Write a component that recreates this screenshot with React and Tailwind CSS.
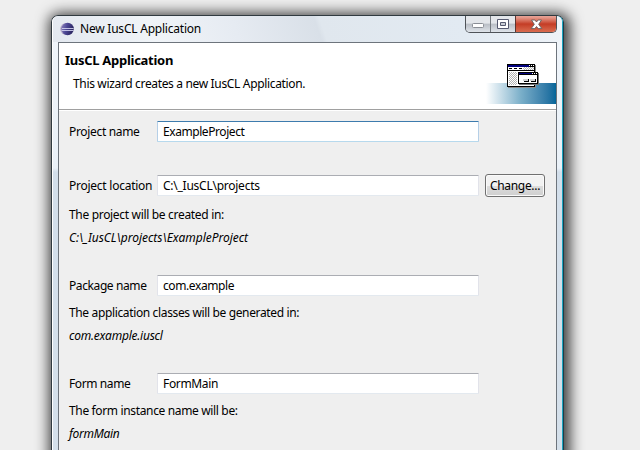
function EclipseIcon() {
  return (
    <svg width="14" height="14" viewBox="0 0 14 14" className="shrink-0">
      <defs>
        <linearGradient id="orb" x1="0" y1="0" x2="1" y2="0.3">
          <stop offset="0" stopColor="#8d84c0" />
          <stop offset="0.5" stopColor="#4c4794" />
          <stop offset="1" stopColor="#2b2662" />
        </linearGradient>
      </defs>
      <circle cx="6.2" cy="7" r="6" fill="#b9aec9" />
      <circle cx="7.6" cy="7" r="6.2" fill="url(#orb)" />
      <path d="M2 6.500h11.600M1.600 8.500h12" stroke="#d0d0ee" strokeWidth="0.9" />
    </svg>
  );
}

function WizardIcon() {
  return (
    <svg width="32" height="24" viewBox="0 0 32 24" shapeRendering="crispEdges">
      <defs>
        <pattern id="dither" width="2" height="2" patternUnits="userSpaceOnUse">
          <rect width="2" height="2" fill="#fff" />
          <rect width="1" height="1" fill="#b4b4b4" />
          <rect x="1" y="1" width="1" height="1" fill="#b4b4b4" />
        </pattern>
      </defs>
      <path d="M1 23h28v1H1zM28 1h1v22h-1z" fill="#8a8a8a" />
      <rect width="28" height="23" fill="#000" />
      <rect x="1" y="1" width="21" height="2" fill="#000080" />
      <path d="M22 1h1v1h-1zM24 1h1v1h-1zM26 1h1v1h-1z" fill="#fff" />
      <rect x="1" y="3" width="26" height="3" fill="#fff" />
      <path d="M2 4h3v1H2zM7 4h3v1H7zM12 4h3v1h-3z" fill="#000" />
      <path d="M16 3h11v3H16z" fill="url(#dither)" />
      <rect x="1" y="7" width="26" height="15" fill="#fff" />
      <rect x="2" y="8" width="8" height="13" fill="url(#dither)" />
      <path d="M12 20h20v1H12zM31 9h1v12h-1z" fill="#777" />
      <rect x="11" y="8" width="20" height="12" fill="#000" />
      <rect x="12" y="9" width="13" height="1" fill="#000080" />
      <path d="M25 9h1v1h-1zM27 9h1v1h-1zM29 9h1v1h-1z" fill="#fff" />
      <rect x="12" y="11" width="18" height="8" fill="#fff" />
      <path d="M17 17h5v1h-5zM24 17h5v1h-5zM21 15h1v2h-1zM28 15h1v2h-1z" fill="#000" />
      <path d="M16 15h5v2h-5zM23 15h5v2h-5z" fill="#d4d4d4" />
    </svg>
  );
}

function WindowButtons() {
  return (
    <div className="flex h-[17px] w-[92px] overflow-hidden rounded-b-[5px] border border-t-0 border-[#4f5358]">
      <div className="flex w-[25px] items-center justify-center border-r border-[#74797f] bg-linear-to-b from-[#e3e6ea] from-45% via-[#b9bec5] via-50% to-[#dfe4ea]">
        <svg width="13" height="6" viewBox="0 0 13 6" className="mt-1">
          <rect x="0.500" y="0.500" width="11" height="4" rx="1" fill="#fff" stroke="#8a8e95" />
        </svg>
      </div>
      <div className="flex w-[25px] items-center justify-center border-r border-[#5c3530] bg-linear-to-b from-[#e3e6ea] from-45% via-[#b9bec5] via-50% to-[#dfe4ea]">
        <svg width="12" height="10" viewBox="0 0 12 10">
          <path d="M.5 .5h11v9H.5z" fill="#fff" stroke="#565a70" />
          <path d="M3.5 3.5h5v3h-5z" fill="#c9cdd4" stroke="#565a70" />
        </svg>
      </div>
      <div className="flex flex-1 items-center justify-center bg-linear-to-b from-[#e7a093] from-5% via-[#c43c25] via-50% to-[#d96c50]">
        <svg width="13" height="11" viewBox="0 0 13 11">
          <path
            d="M1.500 1h3.400l1.600 2 1.600-2h3.400L8.700 5.300l3.100 4.300H8.200L6.500 7.500 4.800 9.600H1.200L4.300 5.300z"
            fill="#fff"
            stroke="#65605f"
            strokeWidth="0.9"
            strokeLinejoin="round"
          />
        </svg>
      </div>
    </div>
  );
}

function Field({ label, value, labelClass = "", valueClass = "", focused, action }) {
  return (
    <div className="flex h-[23px] items-center">
      <div className="w-[88px] shrink-0">
        <span className={labelClass}>{label}</span>
      </div>
      <div
        className={
          "flex h-[21px] w-[322px] items-center rounded-[1px] border bg-white pl-[5px] " +
          (focused
            ? "border-[#b5cfe7] border-t-[#3d7bad] border-b-[#b7d9ed]"
            : "border-[#e2e3ea] border-t-[#abadb3] border-b-[#e3e9ef]")
        }
      >
        <span className={valueClass}>{value}</span>
      </div>
      {action}
    </div>
  );
}

export default function App() {
  return (
    <div className="flex h-[450px] w-[640px] overflow-hidden bg-[#efefef] pt-[15px] pl-[51px] font-['Noto_Sans','Open_Sans',sans-serif] text-[12px] leading-4 whitespace-nowrap text-black">
      <div className="flex h-[520px] w-[513px] shrink-0 flex-col rounded-t-[7px] border border-[#303a40] border-r-[#1f3c48] bg-[linear-gradient(to_bottom,#f0f5fa_0,#eaf1f8_152px,#d3dfeb_156px,#d5e0ea_100%)] shadow-[2px_2px_14px_4px_rgba(0,0,0,0.75)]">
        <div className="flex grow flex-col rounded-t-[6px] border-r border-l border-r-[#19a3bf] border-l-white px-[5px]">
          <div className="-mx-[5px] flex h-[26px] shrink-0 justify-between rounded-t-[6px] bg-[linear-gradient(70deg,#e3e8ef_0,#f0f4f8_20%,#e6ebf2_36%,#d9e0e8_52%,#e0e7ee_53%,#e2eaf2_80%,#eff4f9_100%)] px-[5px]">
            <div className="flex items-center gap-[6px] pl-[2px]">
              <EclipseIcon />
              <span className="tracking-[-0.22px]">New IusCL Application</span>
            </div>
            <WindowButtons />
          </div>
          <div className="flex grow flex-col border border-[#6d747c] bg-[#efefef]">
            <div className="flex h-[67px] shrink-0 justify-between border-b border-[#a0a0a0] bg-white">
              <div className="flex flex-col gap-[8px] pt-[9px] pl-[6px]">
                <span className="text-[13px] leading-4 font-bold tracking-[-0.28px]">IusCL Application</span>
                <span className="pl-2 tracking-[-0.34px]">This wizard creates a new IusCL Application.</span>
              </div>
              <div className="relative flex w-[70px] flex-col justify-end pb-[5px]">
                <div className="h-[21px] bg-linear-to-r from-white via-[#7aafc9] via-50% to-[#00669a]" />
                <div className="absolute top-[21px] left-[21px]">
                  <WizardIcon />
                </div>
              </div>
            </div>
            <div className="flex flex-col border-t border-white px-[10px] pt-[9px]">
              <Field
                label="Project name"
                labelClass="tracking-[-0.33px]"
                value="ExampleProject"
                valueClass="tracking-[-0.43px]"
                focused
              />
              <div className="h-[31px]" />
              <Field
                label="Project location"
                labelClass="tracking-[-0.25px]"
                value="C:\_IusCL\projects"
                valueClass="tracking-[-0.25px]"
                action={
                  <div className="ml-[6px] flex h-[23px] w-[60px] items-center justify-center rounded-[3px] border border-[#707070] bg-linear-to-b from-[#f2f2f2] from-50% via-[#dddddd] via-51% to-[#cfcfcf] shadow-[inset_0_0_0_1px_#fafafa]">
                    <span className="tracking-[-0.3px]">Change...</span>
                  </div>
                }
              />
              <div className="flex h-[77px] flex-col gap-[7px] pt-[10px]">
                <span className="tracking-[-0.32px]">The project will be created in:</span>
                <span className="tracking-[-0.04px] italic">C:\_IusCL\projects\ExampleProject</span>
              </div>
              <Field
                label="Package name"
                labelClass="tracking-[-0.4px]"
                value="com.example"
                valueClass="tracking-[-0.4px]"
              />
              <div className="flex h-[75px] flex-col gap-[7px] pt-[8px]">
                <span className="tracking-[-0.36px]">The application classes will be generated in:</span>
                <span className="tracking-[-0.24px] italic">com.example.iuscl</span>
              </div>
              <Field
                label="Form name"
                labelClass="tracking-[-0.4px]"
                value="FormMain"
                valueClass="tracking-[-0.35px]"
              />
              <div className="flex flex-col gap-[7px] pt-[8px]">
                <span className="tracking-[-0.35px]">The form instance name will be:</span>
                <span className="tracking-[-0.3px] italic">formMain</span>
              </div>
            </div>
          </div>
        </div>
      </div>
    </div>
  );
}
